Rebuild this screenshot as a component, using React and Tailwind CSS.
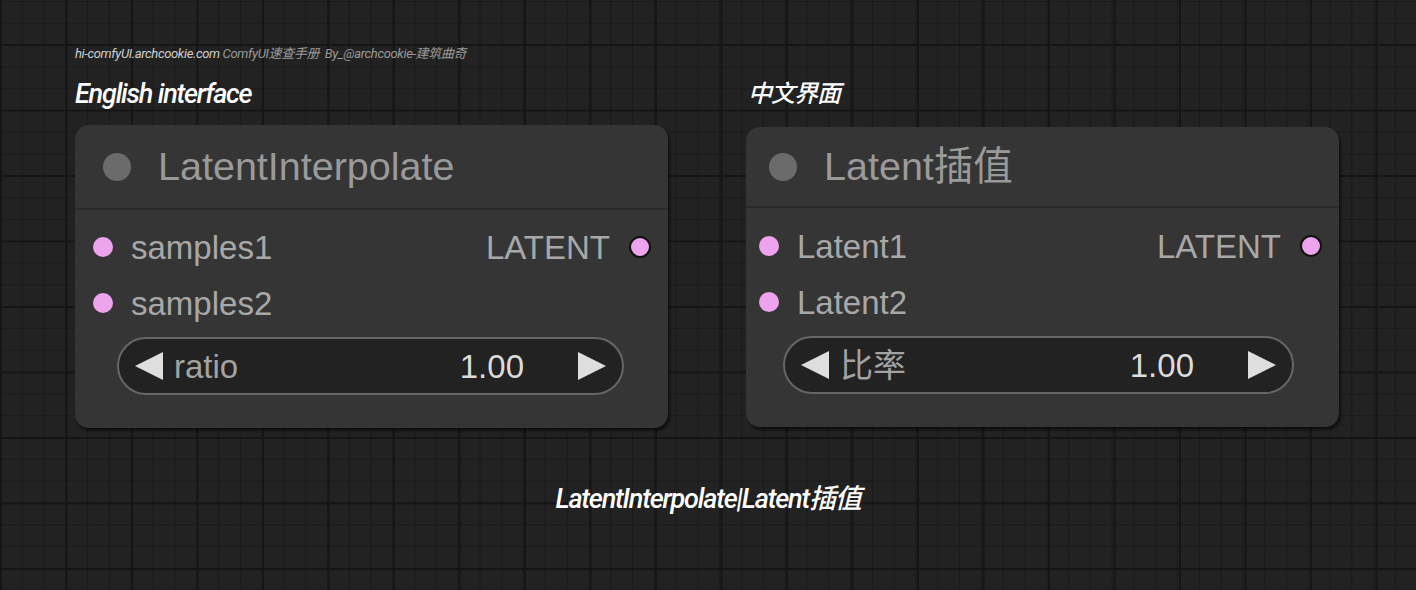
import React from 'react';

const sans = "font-['Liberation_Sans','Noto_Sans_CJK_SC',sans-serif]";
const cond = "font-['Roboto','Noto_Sans_CJK_SC',sans-serif] italic";

const LeftArrow = () => (
  <svg width="28" height="28" viewBox="0 0 28 28" className="shrink-0">
    <polygon points="0,14 28,0 28,28" fill="#dedede" />
  </svg>
);

const RightArrow = () => (
  <svg width="28" height="28" viewBox="0 0 28 28" className="shrink-0">
    <polygon points="0,0 28,14 0,28" fill="#dedede" />
  </svg>
);

const Node = ({ title, inputs, widget, compact = false, className = '' }) => (
  <div className={`w-[593px] rounded-[14px] bg-[#353535] shadow-[2px_3px_3px_rgba(0,0,0,0.55)] flex flex-col ${sans} ${className}`}>
    {/* Title bar */}
    <div className={`flex items-center gap-[27px] border-b-2 border-[#2a2a2a] ${compact ? 'h-[81px] pl-[23px]' : 'h-[85px] pl-[28px]'}`}>
      <span className="w-[28px] h-[28px] rounded-full bg-[#6b6b6b]" />
      <span className="text-[39.5px] leading-none text-[#9a9a9a]">{title}</span>
    </div>

    {/* Slots */}
    <div className={`flex flex-col ${compact ? 'pt-[10px]' : 'pt-[9px]'}`}>
      {inputs.map((name, i) => (
        <div key={name} className={`h-[56px] flex items-center pr-[17px] ${compact ? 'pl-[13px]' : 'pl-[18px]'}`}>
          <span className="w-[20px] h-[20px] rounded-full bg-[#eda3ee]" />
          <span className="ml-[18px] text-[33px] leading-none text-[#a8a8a8]">{name}</span>
          {i === 0 && (
            <>
              <span className="ml-auto text-[33px] leading-none text-[#a8a8a8]">LATENT</span>
              <span className="ml-[19px] w-[22px] h-[22px] rounded-full bg-[#eda3ee] border-2 border-[#111]" />
            </>
          )}
        </div>
      ))}
    </div>

    {/* Widget */}
    <div className={`mt-[6px] mb-[33px] h-[58px] rounded-full border-2 border-[#666] bg-[#222] flex items-center px-[16px] ${compact ? 'ml-[37px] mr-[45px]' : 'ml-[42px] mr-[44px]'}`}>
      <LeftArrow />
      <span className="ml-[11px] text-[33px] leading-none text-[#a3a3a3]">{widget}</span>
      <span className="ml-auto text-[33px] leading-none text-[#dcdcdc]">1.00</span>
      <span className="ml-[54px]"><RightArrow /></span>
    </div>
  </div>
);

export default function App() {
  return (
    <div className="w-[1416px] h-[590px] overflow-hidden bg-[#222222] bg-[linear-gradient(to_right,#151515_2px,transparent_2px),linear-gradient(to_bottom,#151515_2px,transparent_2px),linear-gradient(to_right,#1a1a1a_1px,transparent_1px),linear-gradient(to_bottom,#1a1a1a_1px,transparent_1px)] bg-[size:65.5px_65.5px,65.5px_65.5px,21.8px_21.8px,21.8px_21.8px] bg-[position:0_44px,0_44px,0_1px,0_1px] pt-[45px]">
      {/* Header */}
      <div className={`pl-[75px] text-[13px] leading-[18px] tracking-[-0.35px] ${cond}`}>
        <span className="text-[#cfcfcf]">hi-comfyUI.archcookie.com</span>
        <span className="text-[#9a9a9a]"> ComfyUI速查手册&nbsp;&nbsp;By_@archcookie-建筑曲奇</span>
      </div>

      <div className="flex gap-[78px] pl-[75px] mt-[12px] items-start">
        <div className="flex flex-col">
          <div className={`h-[38px] text-[27px] leading-[38px] font-medium tracking-[-1.2px] text-white ${cond}`}>
            English interface
          </div>
          <Node className="mt-[12px]" title="LatentInterpolate" inputs={['samples1', 'samples2']} widget="ratio" />
        </div>
        <div className="flex flex-col">
          <div className={`h-[38px] pl-[2px] text-[24px] leading-[38px] font-medium tracking-[-1px] text-white ${cond}`}>
            中文界面
          </div>
          <Node compact className="mt-[14px]" title="Latent插值" inputs={['Latent1', 'Latent2']} widget="比率" />
        </div>
      </div>

      <div className={`mt-[52px] text-center text-[27px] leading-[38px] font-medium tracking-[-1.2px] text-white ${cond}`}>
        LatentInterpolate|Latent插值
      </div>
    </div>
  );
}
